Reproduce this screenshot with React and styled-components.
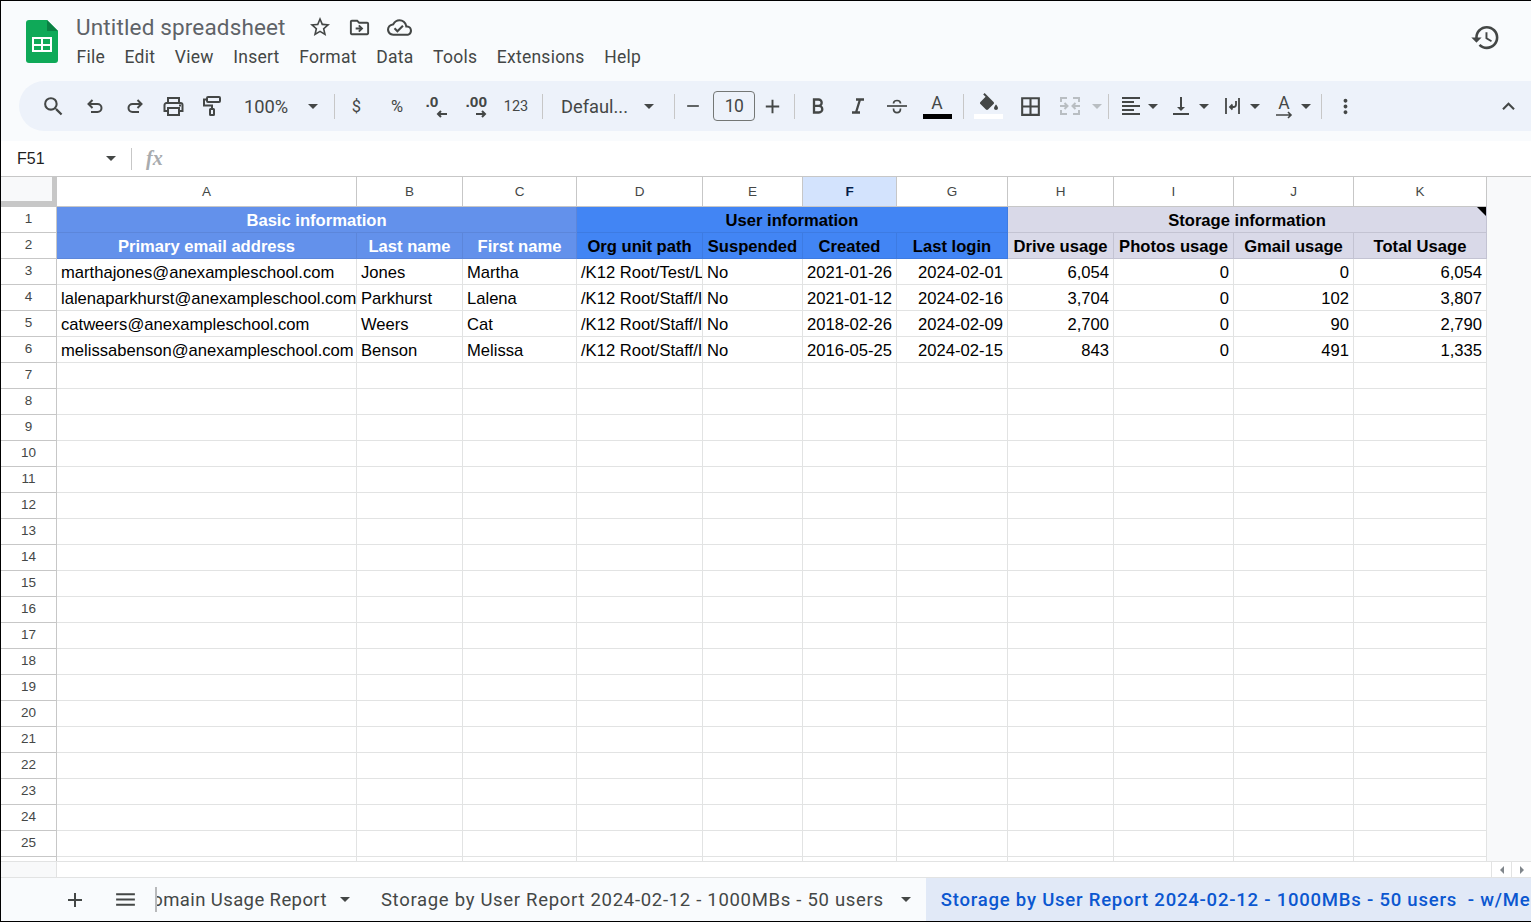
import React from "react";
import styled, { createGlobalStyle } from "styled-components";
import {
  MdSearch,
  MdRemove,
  MdAdd,
  MdBorderAll,
  MdFormatAlignLeft,
  MdVerticalAlignBottom,
  MdMoreVert,
  MdExpandLess,
  MdHistory,
  MdStarBorder,
  MdOutlineDriveFileMove,
  MdOutlineCloudDone,
  MdMenu,
} from "react-icons/md";

const GlobalStyle = createGlobalStyle`
  html, body {
    margin: 0;
    padding: 0;
    background: #fff;
  }
  * {
    box-sizing: border-box;
  }
`;

const columns = ["A", "B", "C", "D", "E", "F", "G", "H", "I", "J", "K"];

const users = [
  ["marthajones@anexampleschool.com", "Jones", "Martha", "/K12 Root/Test/L", "No", "2021-01-26", "2024-02-01", "6,054", "0", "0", "6,054"],
  ["lalenaparkhurst@anexampleschool.com", "Parkhurst", "Lalena", "/K12 Root/Staff/I", "No", "2021-01-12", "2024-02-16", "3,704", "0", "102", "3,807"],
  ["catweers@anexampleschool.com", "Weers", "Cat", "/K12 Root/Staff/I", "No", "2018-02-26", "2024-02-09", "2,700", "0", "90", "2,790"],
  ["melissabenson@anexampleschool.com", "Benson", "Melissa", "/K12 Root/Staff/I", "No", "2016-05-25", "2024-02-15", "843", "0", "491", "1,335"],
];

const subHeads = [
  ["Primary email address", "basic"],
  ["Last name", "basic"],
  ["First name", "basic"],
  ["Org unit path", "user"],
  ["Suspended", "user"],
  ["Created", "user"],
  ["Last login", "user"],
  ["Drive usage", "storage"],
  ["Photos usage", "storage"],
  ["Gmail usage", "storage"],
  ["Total Usage", "storage"],
];

const tones = {
  basic: { bg: "#6391eb", fg: "#fff", line: "#5c86da" },
  user: { bg: "#4285f4", fg: "#000", line: "#3d7be2" },
  storage: { bg: "#d9d9e8", fg: "#000", line: "#c3c3d2" },
};

// toolbar icons, drawn to the stroke weight of the sheet toolbar
function Stroke({ w, h, color = "#444746", sw = 2, children }) {
  return (
    <svg width={w} height={h} viewBox={`0 0 ${w} ${h}`} fill="none" stroke={color} strokeWidth={sw}>
      {children}
    </svg>
  );
}

function SheetsLogo() {
  return (
    <svg width="32" height="43" viewBox="0 0 32 43">
      <path d="M3 0h18l11 11v29a3 3 0 0 1-3 3H3a3 3 0 0 1-3-3V3a3 3 0 0 1 3-3z" fill="#0fa958" />
      <path d="M21 0l11 11H21z" fill="#0a8043" />
      <path d="M6 17h20v15H6z" fill="#fff" />
      <path d="M8 19h7v5H8zM17 19h7v5h-7zM8 26h7v4H8zM17 26h7v4h-7z" fill="#0fa958" />
    </svg>
  );
}

const UndoIcon = () => (
  <Stroke w={16} h={14}>
    <path d="M5.500 1L1.500 5l4 4M1.500 5H10.500a4 4 0 0 1 0 8H4" />
  </Stroke>
);

const RedoIcon = () => (
  <Stroke w={16} h={14}>
    <path d="M10.500 1l4 4-4 4M14.500 5H5.500a4 4 0 0 0 0 8H12" />
  </Stroke>
);

const PrintIcon = () => (
  <Stroke w={21} h={19}>
    <path d="M5 6V1h11v5" />
    <path d="M5 14H1.500V8a2 2 0 0 1 2-2h14a2 2 0 0 1 2 2v6H16" />
    <path d="M5 11h11v7H5z" />
    <path d="M16 8.500h2" />
  </Stroke>
);

const PaintIcon = () => (
  <Stroke w={18} h={20}>
    <rect x="4" y="1" width="13" height="5" rx="1" />
    <path d="M4 3.500H1v6h8v3.500" />
    <rect x="7" y="13" width="4" height="6" rx="0.5" />
  </Stroke>
);

const BoldIcon = () => (
  <Stroke w={12} h={16} sw={2.3}>
    <path d="M2 1.500h4.500a3.200 3.200 0 0 1 0 6.400H2zM2 7.900h5a3.300 3.300 0 0 1 0 6.600H2z" />
  </Stroke>
);

const ItalicIcon = () => (
  <Stroke w={12} h={16} sw={2.3}>
    <path d="M4 1.500h8M0 14.500h8M8 1.500L4 14.500" />
  </Stroke>
);

const StrikeIcon = () => (
  <Stroke w={20} h={15} sw={1.7}>
    <path d="M0 7h20" />
    <path d="M6.500 4.500c0-4 7-4 7 0M6.500 9.500c0 5.500 7 5.500 7 0" />
  </Stroke>
);

const FillIcon = () => (
  <svg width="23" height="21" viewBox="0 0 23 21" fill="#444746">
    <path d="M16.560 8.940L7.620 0 6.210 1.410l2.380 2.380-5.150 5.150c-.59.59-.59 1.540 0 2.120l5.500 5.500c.29.29.68.44 1.060.44s.77-.15 1.060-.44l5.500-5.500c.59-.58.59-1.530 0-2.120z" />
    <path d="M19 11.500s-2 2.170-2 3.500c0 1.100.9 2 2 2s2-.9 2-2c0-1.330-2-3.500-2-3.500z" />
  </svg>
);

const MergeIcon = () => (
  <Stroke w={20} h={18} color="#b9bec2">
    <path d="M7 1H1v4M13 1h6v4M7 17H1v-4M13 17h6v-4" />
    <path d="M0 9h7M4.500 6l3 3-3 3M20 9h-7M15.500 6l-3 3 3 3" />
  </Stroke>
);

const WrapIcon = () => (
  <Stroke w={15} h={16} sw={1.8}>
    <path d="M1 0v16M14 0v16" />
    <path d="M11 3v3.500A2.500 2.500 0 0 1 8.500 9H5M7.500 6.500L5 9l2.500 2.500" />
  </Stroke>
);

const RotateArrow = () => (
  <Stroke w={17} h={8} sw={1.6}>
    <path d="M0 4h15M12 1l3 3-3 3" />
  </Stroke>
);

const DecreaseArrow = () => (
  <Stroke w={11} h={8}>
    <path d="M11 4H2M5 1L2 4l3 3" />
  </Stroke>
);

const IncreaseArrow = () => (
  <Stroke w={11} h={8}>
    <path d="M0 4h9M6 1l3 3-3 3" />
  </Stroke>
);

function App() {
  return (
    <>
      <GlobalStyle />
      <Page>
        <Header>
          <LogoBox>
            <SheetsLogo />
          </LogoBox>
          <TitleBlock>
            <TitleRow>
              <Title>Untitled spreadsheet</Title>
              <TitleIcons>
                <MdStarBorder size={24} />
                <MdOutlineDriveFileMove size={23} />
                <MdOutlineCloudDone size={25} />
              </TitleIcons>
            </TitleRow>
            <Menu>
              {["File", "Edit", "View", "Insert", "Format", "Data", "Tools", "Extensions", "Help"].map((m) => (
                <MenuItem key={m}>{m}</MenuItem>
              ))}
            </Menu>
          </TitleBlock>
          <HistoryButton>
            <MdHistory size={31} />
          </HistoryButton>
        </Header>

        <Toolbar>
          <Tool $w={42}><MdSearch size={25} /></Tool>
          <Tool $w={41}><UndoIcon /></Tool>
          <Tool $w={39}><RedoIcon /></Tool>
          <Tool $w={39}><PrintIcon /></Tool>
          <Tool $w={38}><PaintIcon /></Tool>
          <ToolText $w={72} $left={13}>100%</ToolText>
          <CaretBox $w={19}><Caret /></CaretBox>
          <Sep $ml={12} />
          <ToolText $w={43} $size={16.5}>$</ToolText>
          <ToolText $w={38} $size={16.5}>%</ToolText>
          <Tool $w={40}>
            <DecimalIcon>
              <DecimalText>.0</DecimalText>
              <DecreaseArrow />
            </DecimalIcon>
          </Tool>
          <Tool $w={40}>
            <DecimalIcon>
              <DecimalText>.00</DecimalText>
              <IncreaseArrow />
            </DecimalIcon>
          </Tool>
          <ToolText $w={40} $size={14.5}>123</ToolText>
          <Sep $ml={6} />
          <ToolText $w={96} $left={18}>Defaul...</ToolText>
          <CaretBox $w={20}><Caret /></CaretBox>
          <Sep $ml={15} />
          <Tool $w={36}><MdRemove size={20} /></Tool>
          <SizeBox>10</SizeBox>
          <Tool $w={35}><MdAdd size={23} /></Tool>
          <Sep $ml={4} />
          <Tool $w={46}><BoldIcon /></Tool>
          <Tool $w={33}><ItalicIcon /></Tool>
          <Tool $w={46}><StrikeIcon /></Tool>
          <Tool $w={34}>
            <ColorIcon>
              <ColorLetter>A</ColorLetter>
              <ColorBar $color="#000" />
            </ColorIcon>
          </Tool>
          <Sep $ml={9} />
          <Tool $w={48}>
            <ColorIcon>
              <FillIcon />
              <ColorBar $color="#fff" />
            </ColorIcon>
          </Tool>
          <Tool $w={36}><MdBorderAll size={25} /></Tool>
          <Tool $w={44}><MergeIcon /></Tool>
          <CaretBox $w={10}><Caret $muted /></CaretBox>
          <Sep $ml={6} $mr={5} />
          <Tool $w={34}><MdFormatAlignLeft size={24} /></Tool>
          <CaretBox $w={10}><Caret /></CaretBox>
          <Tool $w={46}><MdVerticalAlignBottom size={24} /></Tool>
          <CaretBox $w={0}><Caret /></CaretBox>
          <Tool $w={46} $ml={5}><WrapIcon /></Tool>
          <CaretBox $w={0}><Caret /></CaretBox>
          <Tool $w={44} $ml={7}>
            <RotateIcon>
              <ColorLetter>A</ColorLetter>
              <RotateArrow />
            </RotateIcon>
          </Tool>
          <CaretBox $w={0}><Caret /></CaretBox>
          <Sep $ml={15} />
          <Tool $w={46}><MdMoreVert size={23} /></Tool>
          <CollapseButton><MdExpandLess size={25} /></CollapseButton>
        </Toolbar>

        <FormulaBar>
          <NameBox>
            <span>F51</span>
            <Caret />
          </NameBox>
          <FormulaSep />
          <Fx>fx</Fx>
        </FormulaBar>

        <SheetArea>
          <Grid>
            <Corner />
            {columns.map((c) => (
              <ColHead key={c} $active={c === "F"}>{c}</ColHead>
            ))}

            <RowHead>1</RowHead>
            <BandCell $tone="basic" $span={3}>Basic information</BandCell>
            <BandCell $tone="user" $span={4}>User information</BandCell>
            <BandCell $tone="storage" $span={4}>
              Storage information
              <NoteMark />
            </BandCell>

            <RowHead>2</RowHead>
            {subHeads.map(([label, tone]) => (
              <BandCell key={label} $tone={tone} $span={1}>{label}</BandCell>
            ))}

            {users.map((user, i) => (
              <React.Fragment key={user[0]}>
                <RowHead>{i + 3}</RowHead>
                {user.map((value, j) => (
                  <Cell key={j} $right={j >= 5}>{value}</Cell>
                ))}
              </React.Fragment>
            ))}

            {Array.from({ length: 20 }, (_, i) => (
              <React.Fragment key={i}>
                <RowHead>{i + 7 < 26 ? i + 7 : ""}</RowHead>
                {columns.map((c) => (
                  <Cell key={c} />
                ))}
              </React.Fragment>
            ))}
          </Grid>
          <RightGutter />
        </SheetArea>

        <ScrollRow>
          <ScrollGutter />
          <ScrollTrack />
          <ScrollArrow>
            <ArrowLeft />
          </ScrollArrow>
          <ScrollArrow>
            <ArrowRight />
          </ScrollArrow>
        </ScrollRow>

        <TabBar>
          <TabTool $w={49.5}><MdAdd size={24} /></TabTool>
          <TabTool $w={42.5}><MdMenu size={25} /></TabTool>
          <TabStrip>
            <Tab $first>
              Domain Usage Report
              <Caret />
            </Tab>
            <Tab>
              Storage by User Report 2024-02-12 - 1000MBs - 50 users
              <Caret />
            </Tab>
            <ActiveTab>Storage by User Report 2024-02-12 - 1000MBs - 50 users&nbsp; - w/Me</ActiveTab>
          </TabStrip>
        </TabBar>
      </Page>
    </>
  );
}

const Page = styled.div`
  width: 1531px;
  height: 922px;
  display: flex;
  flex-direction: column;
  overflow: hidden;
  background: #f9fbfd;
  border-top: 1px solid #000;
  border-left: 1px solid #000;
  border-bottom: 1px solid #000;
  font-family: "Liberation Sans", Arial, sans-serif;
  color: #444746;
`;

const Header = styled.header`
  height: 80px;
  flex: none;
  display: flex;
  padding: 19px 30px 0 25px;
`;

const LogoBox = styled.div`
  width: 50px;
  flex: none;
`;

const TitleBlock = styled.div`
  display: flex;
  flex-direction: column;
  margin-top: -8px;
`;

const TitleRow = styled.div`
  display: flex;
  align-items: center;
  height: 30px;
`;

const Title = styled.span`
  font-family: Roboto, sans-serif;
  font-size: 22.5px;
  color: #5f6368;
  letter-spacing: 0.15px;
`;

const TitleIcons = styled.div`
  display: flex;
  align-items: center;
  gap: 16px;
  margin-left: 22px;
  color: #444746;
`;

const Menu = styled.nav`
  display: flex;
  gap: 19.6px;
  margin-top: 5px;
  padding-left: 0.5px;
`;

const MenuItem = styled.span`
  font-family: Roboto, sans-serif;
  font-size: 17.5px;
  color: #444746;
  letter-spacing: 0.25px;
`;

const HistoryButton = styled.div`
  margin-left: auto;
  margin-top: 2px;
  color: #444746;
`;

const Toolbar = styled.div`
  height: 50px;
  flex: none;
  display: flex;
  align-items: center;
  margin-left: 18px;
  padding-left: 13px;
  background: #edf2fa;
  border-radius: 25px 0 0 25px;
`;

const Tool = styled.div`
  width: ${(p) => p.$w}px;
  flex: none;
  margin-left: ${(p) => p.$ml || 0}px;
  display: flex;
  align-items: center;
  justify-content: center;
  color: #444746;
`;

const ToolText = styled.div`
  width: ${(p) => p.$w}px;
  flex: none;
  padding-left: ${(p) => p.$left || 0}px;
  text-align: ${(p) => (p.$left ? "left" : "center")};
  font-family: Roboto, sans-serif;
  font-size: ${(p) => p.$size || 18.3}px;
  color: #444746;
`;

const CaretBox = styled.div`
  width: ${(p) => p.$w}px;
  flex: none;
  display: flex;
  justify-content: center;
`;

const Caret = styled.span`
  flex: none;
  display: inline-block;
  width: 0;
  height: 0;
  border-left: 5.5px solid transparent;
  border-right: 5.5px solid transparent;
  border-top: 5.5px solid ${(p) => (p.$muted ? "#b9bec2" : "#444746")};
`;

const Sep = styled.div`
  width: 1px;
  height: 25px;
  flex: none;
  margin-left: ${(p) => p.$ml || 0}px;
  margin-right: ${(p) => p.$mr || 0}px;
  background: #c7c7c7;
`;

const DecimalIcon = styled.div`
  width: 21px;
  display: flex;
  flex-direction: column;
  align-items: flex-end;
`;

const DecimalText = styled.span`
  align-self: flex-start;
  line-height: 14px;
  font-family: "Liberation Sans", sans-serif;
  font-size: 15.5px;
  font-weight: 700;
  margin-bottom: 1px;
`;

const SizeBox = styled.div`
  width: 42px;
  height: 30px;
  flex: none;
  margin-left: 2px;
  display: flex;
  align-items: center;
  justify-content: center;
  border: 1px solid #747775;
  border-radius: 4px;
  font-family: Roboto, sans-serif;
  font-size: 17.5px;
  letter-spacing: -0.5px;
`;

const ColorIcon = styled.div`
  display: flex;
  flex-direction: column;
  align-items: center;
`;

const ColorLetter = styled.span`
  font-family: Roboto, sans-serif;
  font-size: 17.5px;
  line-height: 21px;
`;

const ColorBar = styled.div`
  width: 29px;
  height: 5px;
  background: ${(p) => p.$color};
`;

const RotateIcon = styled.div`
  display: flex;
  flex-direction: column;
  align-items: center;
  height: 26px;

  svg {
    margin-top: -3px;
  }
`;

const CollapseButton = styled.div`
  margin-left: auto;
  margin-right: 10px;
  display: flex;
  color: #444746;
`;

const FormulaBar = styled.div`
  height: 36px;
  flex: none;
  margin-top: 10px;
  display: flex;
  align-items: center;
  background: #fff;
  border-bottom: 1px solid #c7c7c7;
`;

const NameBox = styled.div`
  width: 115px;
  flex: none;
  padding: 0 0 0 16px;
  display: flex;
  align-items: center;
  justify-content: space-between;
  font-size: 16px;
  color: #1f1f1f;
`;

const FormulaSep = styled.div`
  width: 1px;
  height: 22px;
  margin-left: 15px;
  background: #c7c7c7;
`;

const Fx = styled.span`
  margin-left: 14px;
  font-family: "Liberation Serif", serif;
  font-style: italic;
  font-weight: 700;
  font-size: 20px;
  color: #a8abae;
`;

const SheetArea = styled.div`
  flex: 1;
  min-height: 0;
  display: flex;
  overflow: hidden;
  background: #fff;
`;

const Grid = styled.div`
  flex: none;
  display: grid;
  grid-template-columns: 56px 300px 106px 114px 126px 100px 94px 111px 106px 120px 120px 133px;
  grid-auto-rows: 26px;
  grid-template-rows: 30px;
  align-content: start;
`;

const Corner = styled.div`
  background: #f8f9fa;
  border-right: 5px solid #c7c7c7;
  border-bottom: 6px solid #c7c7c7;
`;

const ColHead = styled.div`
  display: flex;
  align-items: center;
  justify-content: center;
  font-size: 13.5px;
  font-weight: ${(p) => (p.$active ? 700 : 400)};
  color: ${(p) => (p.$active ? "#041e49" : "#444746")};
  background: ${(p) => (p.$active ? "#d3e3fd" : "#fff")};
  border-right: 1px solid #c7c7c7;
  border-bottom: 1px solid #c7c7c7;
`;

const RowHead = styled.div`
  display: flex;
  align-items: center;
  justify-content: center;
  padding-bottom: 3px;
  font-size: 13.5px;
  color: #444746;
  background: #fff;
  border-right: 1px solid #c7c7c7;
  border-bottom: 1px solid #c7c7c7;
`;

const BandCell = styled.div`
  position: relative;
  grid-column: span ${(p) => p.$span};
  display: flex;
  align-items: center;
  justify-content: center;
  padding-top: 2px;
  white-space: nowrap;
  overflow: hidden;
  font-size: 16.6px;
  font-weight: 700;
  color: ${(p) => tones[p.$tone].fg};
  background: ${(p) => tones[p.$tone].bg};
  border-right: 1px solid ${(p) => tones[p.$tone].line};
  border-bottom: 1px solid ${(p) => tones[p.$tone].line};
`;

const NoteMark = styled.span`
  position: absolute;
  top: 0;
  right: 0;
  width: 0;
  height: 0;
  border-top: 9px solid #000;
  border-left: 9px solid transparent;
`;

const Cell = styled.div`
  padding: 0 ${(p) => (p.$right ? "4px" : "0")} 0 ${(p) => (p.$right ? "0" : "4px")};
  line-height: 27px;
  font-size: 16.6px;
  white-space: nowrap;
  overflow: hidden;
  text-align: ${(p) => (p.$right ? "right" : "left")};
  color: #000;
  background: #fff;
  border-right: 1px solid #e2e3e3;
  border-bottom: 1px solid #e2e3e3;
`;

const RightGutter = styled.div`
  flex: 1;
  background: #f8f9fa;
`;

const ScrollRow = styled.div`
  height: 16px;
  flex: none;
  display: flex;
  background: #fff;
  border-top: 1px solid #e2e3e3;
`;

const ScrollGutter = styled.div`
  width: 56px;
  background: #f8f9fa;
  border-right: 1px solid #e2e3e3;
`;

const ScrollTrack = styled.div`
  flex: 1;
`;

const ScrollArrow = styled.div`
  width: 20px;
  display: flex;
  align-items: center;
  justify-content: center;
  border-left: 1px solid #e2e3e3;
`;

const ArrowLeft = styled.span`
  border-top: 4px solid transparent;
  border-bottom: 4px solid transparent;
  border-right: 4px solid #80868b;
`;

const ArrowRight = styled.span`
  border-top: 4px solid transparent;
  border-bottom: 4px solid transparent;
  border-left: 4px solid #80868b;
`;

const TabBar = styled.div`
  height: 44px;
  flex: none;
  display: flex;
  align-items: stretch;
  background: #f9fbfd;
  border-top: 1px solid #e2e3e3;
  padding-left: 62px;
`;

const TabTool = styled.div`
  width: ${(p) => p.$w}px;
  flex: none;
  display: flex;
  align-items: center;
  color: #444746;
`;

const TabStrip = styled.div`
  flex: 1;
  min-width: 0;
  display: flex;
  overflow: hidden;
  position: relative;

  &::before {
    content: "";
    position: absolute;
    z-index: 1;
    left: 0;
    top: 9px;
    width: 2px;
    height: 25px;
    background: #b8b9bb;
  }
`;

const Tab = styled.div`
  flex: none;
  display: flex;
  align-items: center;
  gap: ${(p) => (p.$first ? "13px" : "17px")};
  padding: 0 ${(p) => (p.$first ? "13px" : "15px")} 0 ${(p) => (p.$first ? "0" : "18px")};
  margin-left: ${(p) => (p.$first ? "-15.3px" : "0")};
  font-family: Roboto, sans-serif;
  font-size: 18.5px;
  letter-spacing: ${(p) => (p.$first ? "0.4px" : "0.7px")};
  white-space: nowrap;
  color: #444746;
`;

const ActiveTab = styled.div`
  flex: none;
  display: flex;
  align-items: center;
  padding: 0 15px;
  font-family: Roboto, sans-serif;
  font-size: 18.5px;
  font-weight: 500;
  letter-spacing: 0.78px;
  white-space: nowrap;
  color: #0b57d0;
  background: #e1e9f7;
`;

export default App;
